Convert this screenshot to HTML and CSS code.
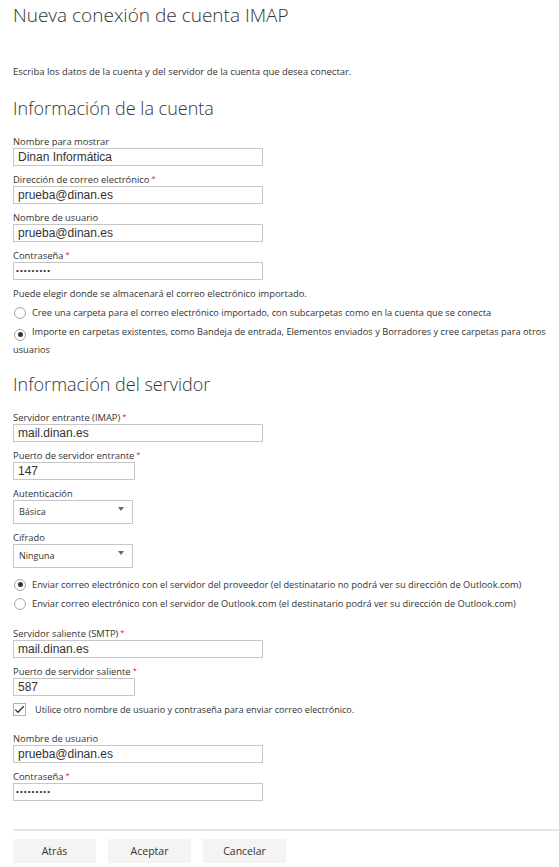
FILE: index.html
```html
<!DOCTYPE html>
<html lang="es">
<head>
<meta charset="utf-8">
<title>Nueva conexión de cuenta IMAP</title>
<link rel="stylesheet" href="styles.css">
</head>
<body>
<div class="page">
  <h1 class="title">Nueva conexión de cuenta IMAP</h1>
  <p class="desc">Escriba los datos de la cuenta y del servidor de la cuenta que desea conectar.</p>

  <h2 class="section">Información de la cuenta</h2>
  <div class="field">
    <div class="label">Nombre para mostrar</div>
    <div class="input wide">Dinan Informática</div>
  </div>
  <div class="field">
    <div class="label">Dirección de correo electrónico<span class="req">*</span></div>
    <div class="input wide">prueba@dinan.es</div>
  </div>
  <div class="field">
    <div class="label">Nombre de usuario</div>
    <div class="input wide">prueba@dinan.es</div>
  </div>
  <div class="field">
    <div class="label">Contraseña<span class="req">*</span></div>
    <div class="input wide pw">•••••••••</div>
  </div>
  <div class="note">Puede elegir donde se almacenará el correo electrónico importado.</div>
  <div class="radios">
    <div class="radio"><span class="dot"></span><span class="rtext">Cree una carpeta para el correo electrónico importado, con subcarpetas como en la cuenta que se conecta</span></div>
    <div class="radio wrap"><span class="dot on"></span><span class="rtext">Importe en carpetas existentes, como Bandeja de entrada, Elementos enviados y Borradores y cree carpetas para otros usuarios</span></div>
  </div>

  <h2 class="section second">Información del servidor</h2>
  <div class="field">
    <div class="label">Servidor entrante (IMAP)<span class="req">*</span></div>
    <div class="input wide">mail.dinan.es</div>
  </div>
  <div class="field">
    <div class="label">Puerto de servidor entrante<span class="req">*</span></div>
    <div class="input short">147</div>
  </div>
  <div class="field">
    <div class="label">Autenticación</div>
    <div class="select"><span>Básica</span><span class="arrow"></span></div>
  </div>
  <div class="field">
    <div class="label">Cifrado</div>
    <div class="select"><span>Ninguna</span><span class="arrow"></span></div>
  </div>
  <div class="radios send">
    <div class="radio"><span class="dot on"></span><span class="rtext">Enviar correo electrónico con el servidor del proveedor (el destinatario no podrá ver su dirección de Outlook.com)</span></div>
    <div class="radio"><span class="dot"></span><span class="rtext">Enviar correo electrónico con el servidor de Outlook.com (el destinatario podrá ver su dirección de Outlook.com)</span></div>
  </div>
  <div class="field">
    <div class="label">Servidor saliente (SMTP)<span class="req">*</span></div>
    <div class="input wide">mail.dinan.es</div>
  </div>
  <div class="field">
    <div class="label">Puerto de servidor saliente<span class="req">*</span></div>
    <div class="input short">587</div>
  </div>
  <div class="check">
    <span class="box"><svg width="11" height="11" viewBox="0 0 11 11"><path d="M1.3 5.6 L4 8.3 L9.8 2.2" fill="none" stroke="#333" stroke-width="1.3"/></svg></span>
    <span class="ctext">Utilice otro nombre de usuario y contraseña para enviar correo electrónico.</span>
  </div>
  <div class="field">
    <div class="label">Nombre de usuario</div>
    <div class="input wide">prueba@dinan.es</div>
  </div>
  <div class="field">
    <div class="label">Contraseña<span class="req">*</span></div>
    <div class="input wide pw">•••••••••</div>
  </div>

  <div class="footer">
    <button class="btn">Atrás</button>
    <button class="btn">Aceptar</button>
    <button class="btn">Cancelar</button>
  </div>
</div>
</body>
</html>
```
FILE: styles.css
```css
html, body {
  margin: 0;
  padding: 0;
  background: #fff;
}
body {
  font-family: "Open Sans", "Noto Sans", sans-serif;
  color: #333;
}
.page {
  padding: 3px 0 0 13px;
}
.title {
  margin: 0;
  font-size: 19px;
  font-weight: 300;
  line-height: 24px;
  color: #333;
}
.desc {
  margin: 39px 0 0;
  font-size: 9.45px;
  line-height: 12px;
}
.section {
  margin: 18px 0 16px;
  font-size: 18px;
  font-weight: 300;
  line-height: 24px;
  color: #333;
}
.section.second {
  margin-top: 14px;
}
.field {
  margin-bottom: 8px;
}
.label {
  font-size: 9.4px;
  line-height: 12px;
  color: #333;
}
.req {
  color: #e81123;
  font-size: 7.5px;
  margin-left: 2px;
  position: relative;
  top: -2px;
}
.input {
  box-sizing: border-box;
  height: 18px;
  border: 1px solid #c6c6c6;
  font-family: "Liberation Sans", Arial, sans-serif;
  font-size: 12px;
  line-height: 16px;
  padding-left: 4px;
  color: #333;
}
.input.wide { width: 250px; }
.input.short { width: 122px; }
.input.pw {
  font-size: 8px;
  letter-spacing: 1.1px;
  padding-left: 2px;
}
.note {
  font-size: 9.4px;
  line-height: 12px;
}
.radios {
  display: flex;
  flex-direction: column;
  gap: 2px;
  margin: 4px 0 0;
  width: 546px;
}
.radios.send {
  margin: 0 0 16px;
}
.radio {
  display: flex;
  align-items: flex-start;
  font-size: 9.25px;
  line-height: 17px;
}
.dot {
  flex: none;
  box-sizing: border-box;
  width: 12px;
  height: 12px;
  border: 1px solid #a6a6a6;
  border-radius: 50%;
  margin: 3px 6px 0 1px;
  display: flex;
  align-items: center;
  justify-content: center;
}
.dot.on::after {
  content: "";
  width: 5px;
  height: 5px;
  border-radius: 50%;
  background: #333;
}
.radio.wrap {
  display: block;
}
.radio.wrap .dot {
  display: inline-flex;
  vertical-align: -2px;
  margin-top: 0;
}
.select {
  box-sizing: border-box;
  width: 120px;
  height: 24px;
  border: 1px solid #c6c6c6;
  display: flex;
  align-items: center;
  justify-content: space-between;
  padding: 0 8px 0 5px;
  font-size: 9px;
}
.arrow {
  width: 0;
  height: 0;
  border-left: 3.5px solid transparent;
  border-right: 3.5px solid transparent;
  border-top: 4px solid #666;
  margin-top: -6px;
}
.check {
  display: flex;
  align-items: center;
  height: 15px;
  margin: -2px 0 16px;
  font-size: 9.1px;
}
.box {
  box-sizing: border-box;
  width: 13px;
  height: 13px;
  border: 1px solid #b0b0b0;
  display: flex;
  align-items: center;
  justify-content: center;
  margin-right: 9px;
}
.box svg { display: block; }
.footer {
  margin-top: 28px;
  border-top: 2px solid #e6e6e6;
  padding-top: 8px;
  display: flex;
  gap: 12px;
}
.btn {
  width: 83px;
  height: 24px;
  border: 0;
  background: #f4f4f4;
  font-family: "Open Sans", "Noto Sans", sans-serif;
  font-size: 10.5px;
  color: #333;
  padding: 0;
}
```
